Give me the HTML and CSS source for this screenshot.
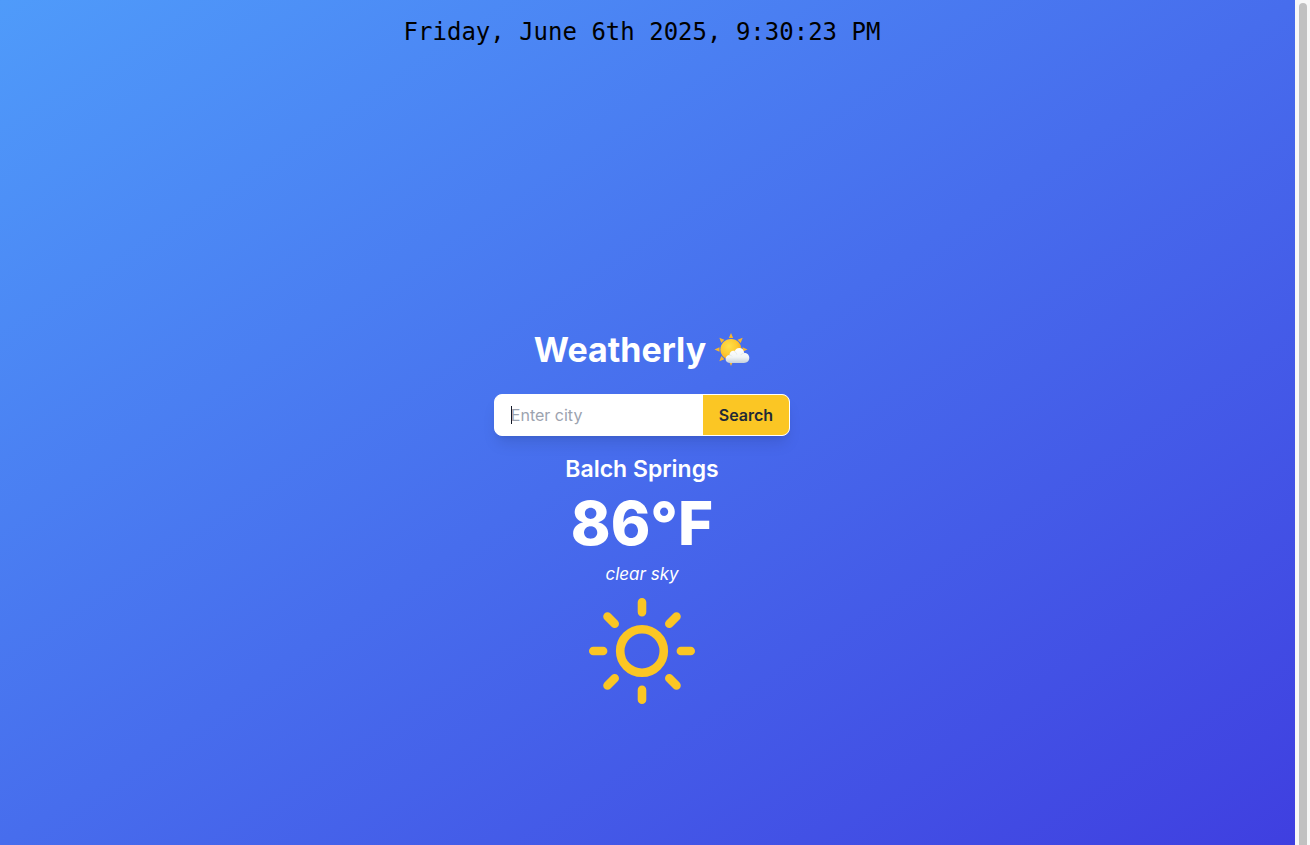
FILE: index.html
```
<!DOCTYPE html>
<html lang="en">
<head>
<meta charset="utf-8">
<meta name="viewport" content="width=device-width, initial-scale=1">
<title>Weatherly</title>
<link rel="stylesheet" href="styles.css">
</head>
<body>
<div class="page">
  <time class="clock" datetime="2025-06-06T21:30:23">Friday, June 6th 2025, 9:30:23 PM</time>
  <main class="weather">
    <h1 class="title">Weatherly
      <svg class="logo" viewBox="0 0 36 36" role="img" aria-label="Sun behind cloud">
        <defs>
          <radialGradient id="sun" cx="40%" cy="35%" r="65%"><stop offset="0" stop-color="#ffe04a"/><stop offset="0.6" stop-color="#fdc930"/><stop offset="1" stop-color="#f5a623"/></radialGradient>
          <linearGradient id="cloud" x1="0" y1="0" x2="0" y2="1"><stop offset="0" stop-color="#ffffff"/><stop offset="0.6" stop-color="#f1f5f6"/><stop offset="1" stop-color="#c5d0dc"/></linearGradient>
        </defs>
        <path id="ray" fill="#f7b52e" d="M17 1l2.2 5h-4.4z"/>
        <use href="#ray" transform="rotate(45 17 17.5)"/>
        <use href="#ray" transform="rotate(90 17 17.5)"/>
        <use href="#ray" transform="rotate(180 17 17.5)"/>
        <use href="#ray" transform="rotate(225 17 17.5)"/>
        <use href="#ray" transform="rotate(270 17 17.5)"/>
        <use href="#ray" transform="rotate(315 17 17.5)"/>
        <circle cx="17" cy="17.5" r="10.6" fill="url(#sun)"/>
        <path fill="url(#cloud)" d="M16.5 31C13.6 31 11.6 29.4 11.6 27c0-2.2 1.7-3.9 3.9-4 .1-2.6 1.7-4.2 3.9-4.2.6 0 1 .1 1.4.3.8-2 2.4-3.1 4.4-3.1 2.8 0 4.8 2 5 4.9 3 0 5.1 2 5.1 4.9 0 3.1-2 5.2-5.3 5.2z"/>
        <path fill="none" stroke="#d7dfe6" stroke-width=".6" stroke-linecap="round" d="M20.5 19.6c1.2.4 2 1.3 2.2 2.5M15.5 23.2c1-.1 1.8.3 2.3.9M30 21.2c-1.3 0-2.4.6-3.1 1.6"/>
      </svg>
    </h1>
    <form class="search">
      <span class="field">
        <input class="city-input" type="text" placeholder="Enter city" aria-label="City">
        <span class="caret"></span>
      </span>
      <button class="search-button" type="button">Search</button>
    </form>
    <h2 class="city">Balch Springs</h2>
    <p class="temperature">86°F</p>
    <p class="description">clear sky</p>
    <svg class="sun-icon" viewBox="-64 -64 128 128" aria-hidden="true">
      <circle r="21.8"/>
      <path d="M0-48.7v9.8M0 48.7v-9.8M-48.7 0h9.8M48.7 0h-9.8M-34.5-34.5l7.2 7.2M34.5-34.5l-7.2 7.2M-34.5 34.5l7.2-7.2M34.5 34.5l-7.2-7.2"/>
    </svg>
  </main>
</div>
<div class="scrollbar" aria-hidden="true"><div class="thumb"></div></div>
</body>
</html>
```

FILE: styles.css
```
* {
  box-sizing: border-box;
  margin: 0;
}

body {
  display: flex;
  min-height: 100vh;
  font-family: Inter, "Liberation Sans", sans-serif;
  color: #fff;
}

.page {
  flex: 1;
  display: flex;
  flex-direction: column;
  align-items: center;
  padding: 16px 11px 0 0;
  background: linear-gradient(to bottom right, #4f9bfa, #3f3fe0);
}

.clock {
  font-family: "DejaVu Sans Mono", monospace;
  font-size: 24px;
  line-height: 32px;
  color: #000;
}

.weather {
  flex: 1;
  display: flex;
  flex-direction: column;
  align-items: center;
  justify-content: center;
  padding-top: 151px;
}

.title {
  display: flex;
  align-items: center;
  gap: 8px;
  margin-bottom: 24px;
  font-size: 34px;
  line-height: 40px;
  font-weight: 700;
}

.logo {
  width: 36px;
  height: 36px;
}

.search {
  display: flex;
  margin-bottom: 16px;
  border: 1px solid #fff;
  border-radius: 8px;
  background: #fff;
  overflow: hidden;
  box-shadow: 0 10px 15px -3px rgba(0, 0, 0, 0.1), 0 4px 6px -4px rgba(0, 0, 0, 0.1);
}

.field {
  position: relative;
}

.city-input {
  display: block;
  width: 208px;
  padding: 8px 16px;
  border: 0;
  outline: 0;
  background: #fff;
  color: #1f2937;
  font: 400 16px/24px Inter, sans-serif;
}

.city-input::placeholder {
  color: #9ca3af;
}

.caret {
  position: absolute;
  top: 11px;
  left: 16px;
  width: 1px;
  height: 18px;
  background: #111827;
}

.search-button {
  padding: 8px 16px;
  border: 0;
  background: #fbc624;
  color: #1f2937;
  font: 600 16px/24px Inter, sans-serif;
}

.city {
  margin-bottom: 7px;
  font-size: 23px;
  line-height: 34px;
  font-weight: 600;
}

.temperature {
  margin-bottom: 8px;
  font-size: 60px;
  line-height: 60px;
  font-weight: 800;
}

.description {
  font-size: 17px;
  line-height: 26px;
  font-style: italic;
}

.sun-icon {
  width: 128px;
  height: 128px;
  fill: none;
  stroke: #fbc624;
  stroke-width: 8.6;
  stroke-linecap: round;
}

.scrollbar {
  width: 15px;
  padding: 3px 3px 0 4px;
  display: flex;
  background: #f8f8f8;
}

.thumb {
  flex: 1;
  border-radius: 4px 4px 0 0;
  background: #c1c1c1;
}
```
